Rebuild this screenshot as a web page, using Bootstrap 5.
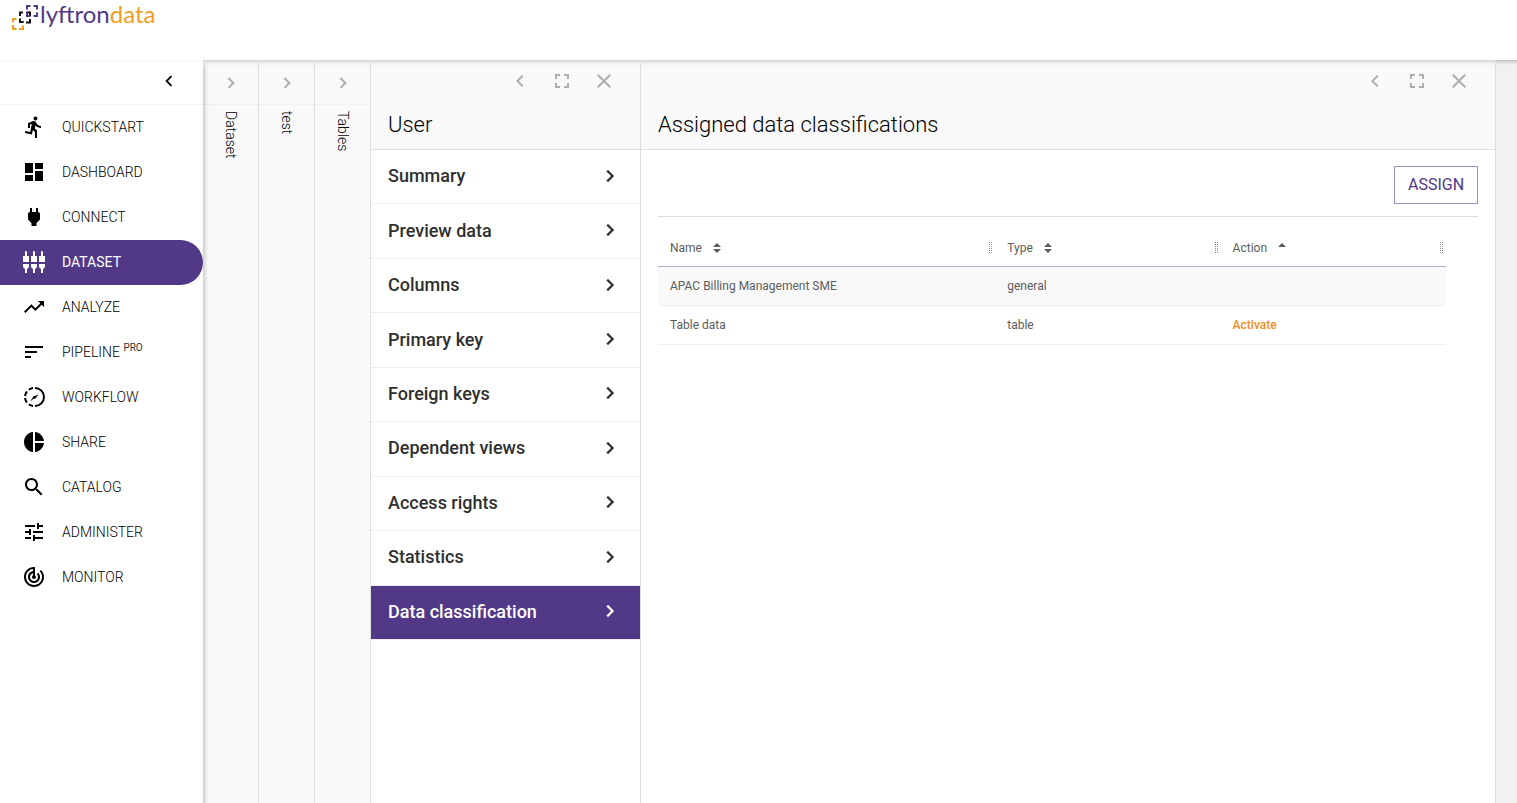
<!DOCTYPE html>
<html lang="en">
<head>
<meta charset="utf-8">
<meta name="viewport" content="width=device-width, initial-scale=1">
<title>Lyftrondata</title>
<link rel="stylesheet" href="https://cdn.jsdelivr.net/npm/bootstrap@5.3.0/dist/css/bootstrap.min.css">
<style>
:root { --brand: #513988; --accent: #f28c1e; --line: #dedede; --soft: #f9f9f9; }
body { font-family: Roboto, "Liberation Sans", sans-serif; color: #000; background: #fff; }
svg { display: block; fill: currentColor; flex: none; }
a { color: inherit; text-decoration: none; }
.icon-btn { border: 0; padding: 0; background: none; color: #aeaeae; }
.topbar { height: 60px; padding-left: 11px; }
.logo-text { font-family: Lato, sans-serif; font-size: 24px; line-height: 28px; color: var(--brand); }
.logo-text span { color: #f39c1f; }
.workspace { min-height: 0; }
.sidebar { width: 203px; z-index: 2; box-shadow: 2px 4px 4px rgba(0,0,0,.2); }
.sidebar-top { height: 45px; border-top: 1px solid #f4f4f4; border-bottom: 1px solid #f0f0f0; padding: 0 23px 3px 0; }
.side-link { height: 45px; padding-left: 22px; gap: 16px; font-size: 14px; font-weight: 300; border-radius: 0 23px 23px 0; }
.side-link svg { margin-bottom: 2px; }
.side-link.active { background: var(--brand); color: #fff; font-weight: 400; }
.side-link sup { font-size: 10px; top: -6px; font-weight: 400; color: #333; }
.panes { background: #f1f1f1; min-width: 0; box-shadow: inset 0 4px 4px -3px rgba(0,0,0,.3); padding-right: 21px; }
.strip { width: 56px; border-right: 1px solid var(--line); background: var(--soft); }
.strip-top { height: 45px; border-bottom: 1px solid #f0f0f0; padding-top: 2px; }
.strip-label { writing-mode: vertical-rl; font-size: 14px; font-weight: 300; margin-top: 6px; line-height: 20px; }
.pane { border-right: 1px solid var(--line); background: #fff; }
.pane-menu { width: 270px; }
.pane-head { height: 90px; background: var(--soft); border-bottom: 1px solid var(--line); padding: 9px 24px 0 17px; }
.shade > * > :first-child { background-image: linear-gradient(rgba(0,0,0,.16), rgba(0,0,0,.04) 3px, transparent 6px); }
.tools { gap: 18px; }
.pane-title { font-size: 22px; font-weight: 300; line-height: 28px; margin: 18px 0 0; }
.menu-rows { display: grid; grid-auto-rows: 1fr; height: 490px; }
.menu-row { border-bottom: 1px solid #eee; padding: 0 18px 2px 17px; font-size: 18px; font-weight: 500; color: #2f2f2f; }
.menu-row.active { background: var(--brand); color: #fff; }
.pane-body { padding: 16px 17px 0; }
.assign { width: 84px; height: 38px; font-size: 16px; color: var(--brand); border: 1px solid #9c8fc6; background: #fff; padding: 0; }
.toolbar { padding-bottom: 12px; border-bottom: 1px solid var(--line); }
.grid-wrap { padding: 12px 32px 0 0; }
.grid-table { table-layout: fixed; width: 100%; font-size: 12px; color: #5c5c5c; border-collapse: separate; border-spacing: 0; }
.grid-table th { height: 38px; font-weight: 400; padding: 0 2px 0 12px; border-bottom: 1px solid #b5acd2; }
.grid-table td { height: 39px; padding: 0 0 0 12px; border-bottom: 1px solid #eee; }
.grid-table tbody tr:first-child { background: var(--soft); }
.grid-table a { color: var(--accent); font-weight: 500; }
.sort-icon { margin-left: 9px; }
</style>
</head>
<body class="d-flex flex-column vh-100 overflow-hidden">
<svg width="0" height="0" class="position-absolute" aria-hidden="true">
  <symbol id="left" viewBox="0 0 24 24"><path d="M15.410 7.410 14 6l-6 6 6 6 1.410-1.410L10.830 12z"/></symbol>
  <symbol id="right" viewBox="0 0 24 24"><path stroke="currentColor" stroke-width=".3" d="M10 6 8.590 7.410 13.170 12l-4.580 4.590L10 18l6-6z"/></symbol>
  <symbol id="full" viewBox="0 0 24 24"><path d="M7 14H5v5h5v-2H7v-3zm-2-4h2V7h3V5H5v5zm12 7h-3v2h5v-5h-2v3zM14 5v2h3v3h2V5h-5z"/></symbol>
  <symbol id="close" viewBox="0 0 24 24"><path d="M19 6.410 17.590 5 12 10.590 6.410 5 5 6.410 10.590 12 5 17.590 6.410 19 12 13.410 17.590 19 19 17.590 13.410 12z"/></symbol>
  <symbol id="sort" viewBox="0 0 8 10"><path d="M0 4 4 0l4 4zM0 6h8L4 10z"/></symbol>
  <symbol id="grip" viewBox="0 0 5 12"><path fill="none" stroke="#888" stroke-dasharray="1 1" d="M1.500 0v12M3.500 0v12"/></symbol>
</svg>

<header class="topbar d-flex align-items-start flex-shrink-0">
  <a href="#" class="d-flex" aria-label="Lyftrondata home">
    <svg width="29" height="32" viewBox="0 0 29 32" stroke-width="2">
      <g fill="none">
        <path stroke="#f39c1f" d="M5.500 19H2v3.500M2 25v4h3.500M8 29h4v-3.500M12 23v-2"/>
        <path stroke="#111" d="M12 12.500H9V16M9 18.500v3.500h3.500M15 22.500h4V19M19 16v-3.500h-3"/>
        <path stroke="#513988" d="M19.500 6H16v3.500M16 11.500V16h3.500M22.500 16H26v-3.500M26 9.500V6h-3.500"/>
      </g>
    </svg>
    <span class="logo-text">lyftron<span>data</span></span>
  </a>
</header>

<div class="workspace d-flex flex-grow-1">
  <nav class="sidebar bg-white flex-shrink-0 position-relative">
    <div class="sidebar-top d-flex justify-content-end align-items-center">
      <button class="icon-btn text-black" aria-label="Collapse menu"><svg width="22" height="22"><use href="#left"/></svg></button>
    </div>
    <a href="#" class="side-link d-flex align-items-center"><svg width="24" height="24" viewBox="0 0 24 24"><path d="M13.490 5.480c1.100 0 2-.9 2-2s-.9-2-2-2-2 .9-2 2 .9 2 2 2zm-3.600 13.900 1-4.400 2.100 2v6h2v-7.500l-2.100-2 .6-3c1.300 1.500 3.300 2.500 5.500 2.500v-2c-1.900 0-3.500-1-4.300-2.400l-1-1.600c-.4-.6-1-1-1.700-1-.3 0-.5.1-.8.1l-5.200 2.200v4.700h2v-3.400l1.800-.7-1.600 8.100-4.900-1-.4 2 7 1.400z"/></svg>QUICKSTART</a>
    <a href="#" class="side-link d-flex align-items-center"><svg width="24" height="24" viewBox="0 0 24 24"><path d="M3 13h8V3H3v10zm0 8h8v-6H3v6zm10 0h8V11h-8v10zm0-18v6h8V3h-8z"/></svg>DASHBOARD</a>
    <a href="#" class="side-link d-flex align-items-center"><svg width="24" height="24" viewBox="0 0 24 24"><path d="M16.010 7 16 3h-2v4h-4V3H8v4h-.01C7 6.990 6 7.990 6 8.990v5.490L9.500 18v3h5v-3l3.500-3.510v-5.500c0-1-1-2-1.990-1.990z"/></svg>CONNECT</a>
    <a href="#" class="side-link active d-flex align-items-center" aria-current="page"><svg width="24" height="24" viewBox="0 0 24 24"><path d="M5 2c0-.55-.45-1-1-1s-1 .45-1 1v4H1v6h6V6H5V2zm4 14c0 1.300.84 2.400 2 2.820V23h2v-4.180c1.160-.41 2-1.510 2-2.820v-2H9v2zm-8 0c0 1.300.84 2.400 2 2.820V23h2v-4.180C6.160 18.400 7 17.300 7 16v-2H1v2zM21 6V2c0-.55-.45-1-1-1s-1 .45-1 1v4h-2v6h6V6h-2zm-8-4c0-.55-.45-1-1-1s-1 .45-1 1v4H9v6h6V6h-2V2zm4 14c0 1.300.84 2.400 2 2.820V23h2v-4.180c1.160-.41 2-1.510 2-2.820v-2h-6v2z"/></svg>DATASET</a>
    <a href="#" class="side-link d-flex align-items-center"><svg width="24" height="24" viewBox="0 0 24 24"><path d="m16 6 2.290 2.290-4.880 4.880-4-4L2 16.590 3.410 18l6-6 4 4 6.300-6.290L22 12V6z"/></svg>ANALYZE</a>
    <a href="#" class="side-link d-flex align-items-center"><svg width="24" height="24" viewBox="0 0 24 24"><path d="M3 18h6v-2H3v2zM3 6v2h18V6H3zm0 7h12v-2H3v2z"/></svg><span>PIPELINE <sup>PRO</sup></span></a>
    <a href="#" class="side-link d-flex align-items-center"><svg width="24" height="24" viewBox="0 0 24 24"><path fill="none" stroke="currentColor" stroke-width="2" d="M13 3a9 9 0 0 1 0 18M11 3a9 9 0 0 0-4.200 1.700M5 6.500A9 9 0 0 0 3 11M3 13a9 9 0 0 0 2 4.500M6.800 19.300A9 9 0 0 0 11 21"/><path d="m16.500 9.500-2.500 3.300a1.500 1.500 0 0 1-2 .7L8 16.500l3-4.200a1.600 1.600 0 0 1 1.800-1.300z"/></svg>WORKFLOW</a>
    <a href="#" class="side-link d-flex align-items-center"><svg width="24" height="24" viewBox="0 0 24 24"><path d="M11 2v20c-5.070-.5-9-4.790-9-10s3.930-9.500 9-10zm2.030 0v8.990H22c-.47-4.740-4.240-8.520-8.970-8.990zm0 11.010V22c4.740-.47 8.500-4.250 8.970-8.990h-8.970z"/></svg>SHARE</a>
    <a href="#" class="side-link d-flex align-items-center"><svg width="24" height="24" viewBox="0 0 24 24"><path d="M15.500 14h-.79l-.28-.27C15.410 12.590 16 11.110 16 9.500 16 5.910 13.090 3 9.500 3S3 5.910 3 9.500 5.910 16 9.500 16c1.610 0 3.090-.59 4.230-1.570l.27.28v.79l5 4.990L20.490 19l-4.990-5zm-6 0C7.010 14 5 11.990 5 9.500S7.010 5 9.500 5 14 7.010 14 9.500 11.990 14 9.500 14z"/></svg>CATALOG</a>
    <a href="#" class="side-link d-flex align-items-center"><svg width="24" height="24" viewBox="0 0 24 24"><path d="M3 17v2h6v-2H3zM3 5v2h10V5H3zm10 16v-2h8v-2h-8v-2h-2v6h2zM7 9v2H3v2h4v2h2V9H7zm14 4v-2H11v2h10zm-6-4h2V7h4V5h-4V3h-2v6z"/></svg>ADMINISTER</a>
    <a href="#" class="side-link d-flex align-items-center"><svg width="24" height="24" viewBox="0 0 24 24"><path d="m19.070 4.930-1.410 1.410C19.100 7.790 20 9.790 20 12c0 4.420-3.580 8-8 8s-8-3.580-8-8c0-4.080 3.050-7.440 7-7.930v2.020C8.160 6.570 6 9.030 6 12c0 3.310 2.690 6 6 6s6-2.690 6-6c0-1.660-.67-3.160-1.760-4.240l-1.410 1.410C15.550 9.900 16 10.900 16 12c0 2.210-1.790 4-4 4s-4-1.790-4-4c0-1.860 1.280-3.410 3-3.860v2.140c-.6.350-1 .98-1 1.720 0 1.100.9 2 2 2s2-.9 2-2c0-.74-.4-1.380-1-1.720V2h-1C6.480 2 2 6.480 2 12s4.480 10 10 10 10-4.480 10-10c0-2.760-1.120-5.260-2.930-7.070z"/></svg>MONITOR</a>
  </nav>

  <main class="panes shade d-flex flex-grow-1">
    <section class="strip d-flex flex-column align-items-center flex-shrink-0">
      <div class="strip-top w-100 d-flex justify-content-center align-items-center"><button class="icon-btn" aria-label="Expand Dataset"><svg width="22" height="22"><use href="#right"/></svg></button></div>
      <span class="strip-label">Dataset</span>
    </section>
    <section class="strip d-flex flex-column align-items-center flex-shrink-0">
      <div class="strip-top w-100 d-flex justify-content-center align-items-center"><button class="icon-btn" aria-label="Expand test"><svg width="22" height="22"><use href="#right"/></svg></button></div>
      <span class="strip-label">test</span>
    </section>
    <section class="strip d-flex flex-column align-items-center flex-shrink-0">
      <div class="strip-top w-100 d-flex justify-content-center align-items-center"><button class="icon-btn" aria-label="Expand Tables"><svg width="22" height="22"><use href="#right"/></svg></button></div>
      <span class="strip-label">Tables</span>
    </section>

    <section class="pane pane-menu flex-shrink-0">
      <div class="pane-head">
        <div class="tools d-flex justify-content-end">
          <button class="icon-btn" aria-label="Collapse"><svg width="24" height="24"><use href="#left"/></svg></button>
          <button class="icon-btn" aria-label="Full screen"><svg width="24" height="24"><use href="#full"/></svg></button>
          <button class="icon-btn" aria-label="Close"><svg width="24" height="24"><use href="#close"/></svg></button>
        </div>
        <h1 class="pane-title">User</h1>
      </div>
      <div class="menu-rows">
        <a href="#" class="menu-row d-flex align-items-center justify-content-between">Summary<svg width="24" height="24"><use href="#right"/></svg></a>
        <a href="#" class="menu-row d-flex align-items-center justify-content-between">Preview data<svg width="24" height="24"><use href="#right"/></svg></a>
        <a href="#" class="menu-row d-flex align-items-center justify-content-between">Columns<svg width="24" height="24"><use href="#right"/></svg></a>
        <a href="#" class="menu-row d-flex align-items-center justify-content-between">Primary key<svg width="24" height="24"><use href="#right"/></svg></a>
        <a href="#" class="menu-row d-flex align-items-center justify-content-between">Foreign keys<svg width="24" height="24"><use href="#right"/></svg></a>
        <a href="#" class="menu-row d-flex align-items-center justify-content-between">Dependent views<svg width="24" height="24"><use href="#right"/></svg></a>
        <a href="#" class="menu-row d-flex align-items-center justify-content-between">Access rights<svg width="24" height="24"><use href="#right"/></svg></a>
        <a href="#" class="menu-row d-flex align-items-center justify-content-between">Statistics<svg width="24" height="24"><use href="#right"/></svg></a>
        <a href="#" class="menu-row active d-flex align-items-center justify-content-between" aria-current="true">Data classification<svg width="24" height="24"><use href="#right"/></svg></a>
      </div>
    </section>

    <section class="pane flex-grow-1">
      <div class="pane-head">
        <div class="tools d-flex justify-content-end">
          <button class="icon-btn" aria-label="Collapse"><svg width="24" height="24"><use href="#left"/></svg></button>
          <button class="icon-btn" aria-label="Full screen"><svg width="24" height="24"><use href="#full"/></svg></button>
          <button class="icon-btn" aria-label="Close"><svg width="24" height="24"><use href="#close"/></svg></button>
        </div>
        <h2 class="pane-title">Assigned data classifications</h2>
      </div>
      <div class="pane-body">
        <div class="toolbar d-flex justify-content-end"><button class="assign">ASSIGN</button></div>
        <div class="grid-wrap">
          <table class="grid-table">
            <colgroup><col style="width:42.800%"><col style="width:28.600%"><col style="width:28.600%"></colgroup>
            <thead><tr>
              <th scope="col"><div class="d-flex align-items-center"><span>Name</span><svg class="sort-icon" width="12" height="10"><use href="#sort"/></svg><svg class="ms-auto" width="5" height="12"><use href="#grip"/></svg></div></th>
              <th scope="col"><div class="d-flex align-items-center"><span>Type</span><svg class="sort-icon" width="12" height="10"><use href="#sort"/></svg><svg class="ms-auto" width="5" height="12"><use href="#grip"/></svg></div></th>
              <th scope="col"><div class="d-flex align-items-center"><span>Action</span><svg class="sort-icon" width="12" height="10" viewBox="0 0 8 10"><path d="M0 4 4 0l4 4z"/></svg><svg class="ms-auto" width="5" height="12"><use href="#grip"/></svg></div></th>
            </tr></thead>
            <tbody>
              <tr><td>APAC Billing Management SME</td><td>general</td><td></td></tr>
              <tr><td>Table data</td><td>table</td><td><a href="#">Activate</a></td></tr>
            </tbody>
          </table>
        </div>
      </div>
    </section>
  </main>
</div>
<script src="https://cdn.jsdelivr.net/npm/bootstrap@5.3.0/dist/js/bootstrap.bundle.min.js"></script>
</body>
</html>
